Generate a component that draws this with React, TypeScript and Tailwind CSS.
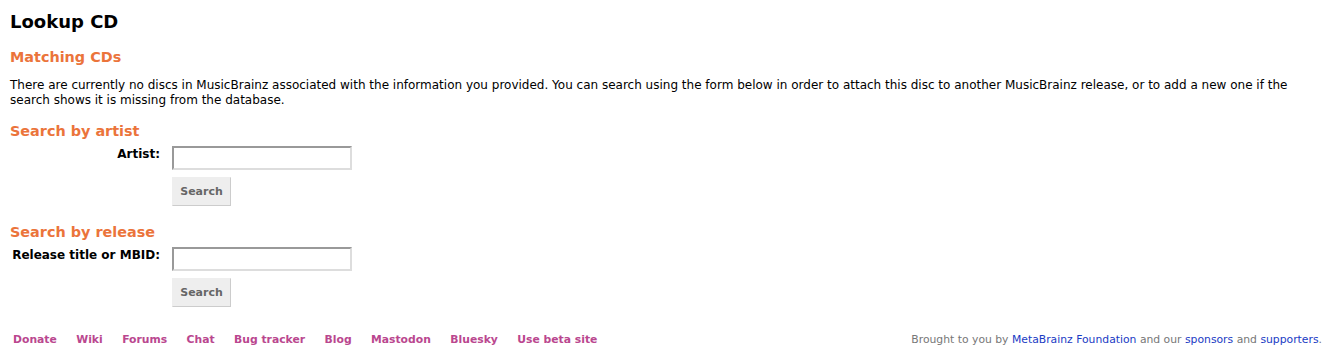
// Lookup CD — 디스크 검색 결과 없음 화면
const FONT = "font-['DejaVu_Sans',_'Liberation_Sans',_sans-serif]";

const FOOTER_LINKS = [
  "Donate",
  "Wiki",
  "Forums",
  "Chat",
  "Bug tracker",
  "Blog",
  "Mastodon",
  "Bluesky",
  "Use beta site",
];

function SearchRow({ label }: { label: string }) {
  return (
    <div className="flex flex-col gap-[7px]">
      <div className="flex items-start">
        <label className="w-[150px] pt-[2px] text-right text-[12px] leading-[12px] font-bold text-black">
          {label}
        </label>
        <input
          type="text"
          className="ml-[12px] h-[24px] w-[180px] border-2 border-t-[#999] border-l-[#999] border-b-[#ddd] border-r-[#ddd] bg-white"
        />
      </div>
      <div className="pl-[162px]">
        <button className="h-[29px] w-[59px] border border-t-[#eee] border-l-[#eee] border-b-[#ccc] border-r-[#ccc] bg-[#eee] pt-[1px] text-[11px] font-bold text-[#666]">
          Search
        </button>
      </div>
    </div>
  );
}

export default function App() {
  return (
    <div className={`${FONT} min-h-[364px] bg-white text-[12px] text-black`}>
      <main className="px-[10px] pt-[11px]">
        <h1 className="text-[18px] leading-[21px] font-bold">Lookup CD</h1>

        <h2 className="mt-[17px] text-[14.4px] leading-[17px] font-bold text-[#eb743b]">
          Matching CDs
        </h2>
        <p className="mt-[12px] leading-[15px]">
          There are currently no discs in MusicBrainz associated with the information you provided. You can
          search using the form below in order to attach this disc to another MusicBrainz release, or to add a
          new one if the search shows it is missing from the database.
        </p>

        <h2 className="mt-[15px] text-[14.4px] leading-[17px] font-bold text-[#eb743b]">Search by artist</h2>
        <div className="mt-[6px]">
          <SearchRow label="Artist:" />
        </div>

        <h2 className="mt-[18px] text-[14.4px] leading-[17px] font-bold text-[#eb743b]">
          Search by release
        </h2>
        <div className="mt-[6px]">
          <SearchRow label="Release title or MBID:" />
        </div>
      </main>

      <footer className="mt-[25px] flex items-center justify-between pr-[8px] pl-[13px] text-[10.8px]">
        <div className="flex gap-[19.4px]">
          {FOOTER_LINKS.map((l) => (
            <a key={l} href="#" className="font-bold text-[#ba478f]">
              {l}
            </a>
          ))}
        </div>
        <p className="text-[#777]">
          Brought to you by{" "}
          <a href="#" className="text-[#1a3bc4]">
            MetaBrainz Foundation
          </a>{" "}
          and our{" "}
          <a href="#" className="text-[#1a3bc4]">
            sponsors
          </a>{" "}
          and{" "}
          <a href="#" className="text-[#1a3bc4]">
            supporters
          </a>
          .
        </p>
      </footer>
    </div>
  );
}
